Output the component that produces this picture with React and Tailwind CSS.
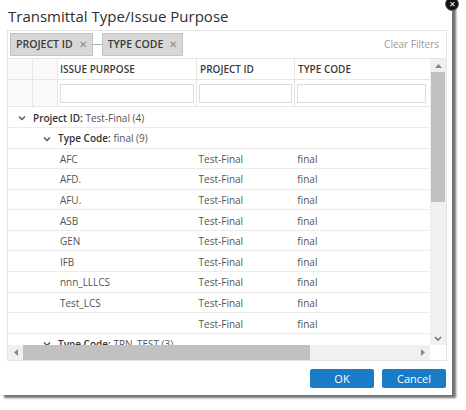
import React from 'react';

const rows = [
  { purpose: 'AFC', project: 'Test-Final', type: 'final' },
  { purpose: 'AFD.', project: 'Test-Final', type: 'final' },
  { purpose: 'AFU.', project: 'Test-Final', type: 'final' },
  { purpose: 'ASB', project: 'Test-Final', type: 'final' },
  { purpose: 'GEN', project: 'Test-Final', type: 'final' },
  { purpose: 'IFB', project: 'Test-Final', type: 'final' },
  { purpose: 'nnn_LLLCS', project: 'Test-Final', type: 'final' },
  { purpose: 'Test_LCS', project: 'Test-Final', type: 'final' },
  { purpose: '', project: 'Test-Final', type: 'final' },
];

const Chevron = () => (
  <svg width="8" height="6" viewBox="0 0 8 6" className="shrink-0">
    <path d="M1 1.5 L4 4.5 L7 1.5" fill="none" stroke="#555" strokeWidth="1.4" />
  </svg>
);

const Chip = ({ label }) => (
  <div className="flex items-center gap-[6px] h-[23px] px-[5px] bg-[#d7d7d7] border border-[#c3c3c3] text-[10.5px] font-semibold text-[#3a3a3a]">
    <span>{label}</span>
    <span className="text-[#888] text-[10px] font-normal">✕</span>
  </div>
);

export default function App() {
  return (
    <div className="relative w-[466px] h-[410px] bg-white overflow-hidden" style={{ fontFamily: '"Open Sans", "Liberation Sans", sans-serif' }}>
      <div className="w-[452px] h-[395px] bg-white flex flex-col shadow-[4px_3px_2px_rgba(0,0,0,0.55)]">
        <div className="h-[30px] pl-[8px] pt-[5px] text-[15px] leading-[22px] text-[#2e2e2e]">
          Transmittal Type/Issue Purpose
        </div>

        <div className="ml-[7px] w-[440px] h-[331px] border border-[#e3e3e3] flex flex-col">
          {/* group panel */}
          <div className="h-[28px] shrink-0 flex items-center pl-[2px] pr-[7px] border-b border-[#e3e3e3]">
            <Chip label="PROJECT ID" />
            <div className="w-[9px] h-px bg-[#aaa]" />
            <Chip label="TYPE CODE" />
            <span className="ml-auto text-[10px] text-[#9a9a9a]">Clear Filters</span>
          </div>

          <div className="flex flex-1 min-h-0">
            <div className="flex-1 min-w-0 overflow-hidden text-[10px]">
              {/* header */}
              <div className="flex h-[21px] border-b border-[#e6e6e6] font-semibold text-[#3a3a3a]">
                <div className="w-[25px] border-r border-[#e6e6e6] bg-[#fafafa]" />
                <div className="w-[25px] border-r border-[#e6e6e6] bg-[#fafafa]" />
                <div className="w-[139px] border-r border-[#e6e6e6] pl-[2px] flex items-center">ISSUE PURPOSE</div>
                <div className="w-[98px] border-r border-[#e6e6e6] pl-[3px] flex items-center">PROJECT ID</div>
                <div className="w-[133px] pl-[3px] flex items-center">TYPE CODE</div>
              </div>
              {/* filter row */}
              <div className="flex h-[27px] border-b border-[#e6e6e6]">
                <div className="w-[25px] border-r border-[#e6e6e6] bg-[#fafafa]" />
                <div className="w-[25px] border-r border-[#e6e6e6] bg-[#fafafa]" />
                <div className="w-[139px] border-r border-[#e6e6e6] px-[2px] flex items-center">
                  <div className="w-full h-[19px] border border-[#dcdcdc]" />
                </div>
                <div className="w-[98px] border-r border-[#e6e6e6] px-[2px] flex items-center">
                  <div className="w-full h-[19px] border border-[#dcdcdc]" />
                </div>
                <div className="w-[133px] px-[2px] flex items-center">
                  <div className="w-full h-[19px] border border-[#dcdcdc]" />
                </div>
              </div>
              {/* groups */}
              <div className="flex items-center h-[21px] pt-[2px] border-b border-[#ececec] pl-[10px] gap-[7px]">
                <Chevron />
                <span className="text-[#333]"><span className="font-semibold">Project ID:</span> <span className="text-[#555]">Test-Final (4)</span></span>
              </div>
              <div className="flex items-center h-[20.5px] pt-[2px] border-b border-[#ececec] pl-[35px] gap-[7px]">
                <Chevron />
                <span className="text-[#333]"><span className="font-semibold">Type Code:</span> <span className="text-[#555]">final (9)</span></span>
              </div>
              {rows.map((r, i) => (
                <div key={i} className="flex items-center h-[20.6px] pt-[2px] border-b border-[#ececec] text-[#555]">
                  <div className="w-[52px]" />
                  <div className="w-[139px]">{r.purpose}</div>
                  <div className="w-[99px]">{r.project}</div>
                  <div className="w-[133px]">{r.type}</div>
                </div>
              ))}
              <div className="flex items-center h-[20.5px] pl-[35px] gap-[7px]">
                <Chevron />
                <span className="text-[#333]"><span className="font-semibold">Type Code:</span> <span className="text-[#555]">TRN_TEST (3)</span></span>
              </div>
            </div>
            {/* vertical scrollbar */}
            <div className="w-[16px] shrink-0 bg-[#f0f0f0] flex flex-col">
              <div className="h-[13px] flex items-center justify-center">
                <svg width="7" height="4" viewBox="0 0 7 4"><path d="M0 4 L3.5 0 L7 4 Z" fill="#888" /></svg>
              </div>
              <div className="h-[130px] mx-px bg-[#c1c1c1]" />
              <div className="flex-1" />
              <div className="h-[14px] flex items-center justify-center">
                <svg width="8" height="5" viewBox="0 0 8 5"><path d="M1 1 L4 4 L7 1" fill="none" stroke="#666" strokeWidth="1.3" /></svg>
              </div>
            </div>
          </div>

          {/* horizontal scrollbar */}
          <div className="h-[15px] shrink-0 flex">
            <div className="flex-1 bg-[#f0f0f0] flex items-center">
              <div className="w-[15px] flex items-center justify-center">
                <svg width="4" height="7" viewBox="0 0 4 7"><path d="M4 0 L0 3.5 L4 7 Z" fill="#888" /></svg>
              </div>
              <div className="w-[287px] h-full bg-[#c1c1c1]" />
              <div className="flex-1" />
              <div className="w-[14px] flex items-center justify-center">
                <svg width="4" height="7" viewBox="0 0 4 7"><path d="M0 0 L4 3.5 L0 7 Z" fill="#888" /></svg>
              </div>
            </div>
            <div className="w-[16px] bg-white" />
          </div>
        </div>

        <div className="flex justify-end gap-[8px] pr-[6px] pt-[8px]">
          <button className="w-[64px] h-[19px] rounded-[2px] bg-[#1a7cc7] text-white text-[11px] leading-[19px]">OK</button>
          <button className="w-[64px] h-[19px] rounded-[2px] bg-[#1a7cc7] text-white text-[11px] leading-[19px]">Cancel</button>
        </div>
      </div>

      {/* close button */}
      <div className="absolute left-[445px] top-[-3px] w-[14px] h-[14px] rounded-full bg-[#111] border border-[#666] flex items-center justify-center">
        <span className="text-white text-[8px] leading-none">✕</span>
      </div>
    </div>
  );
}
